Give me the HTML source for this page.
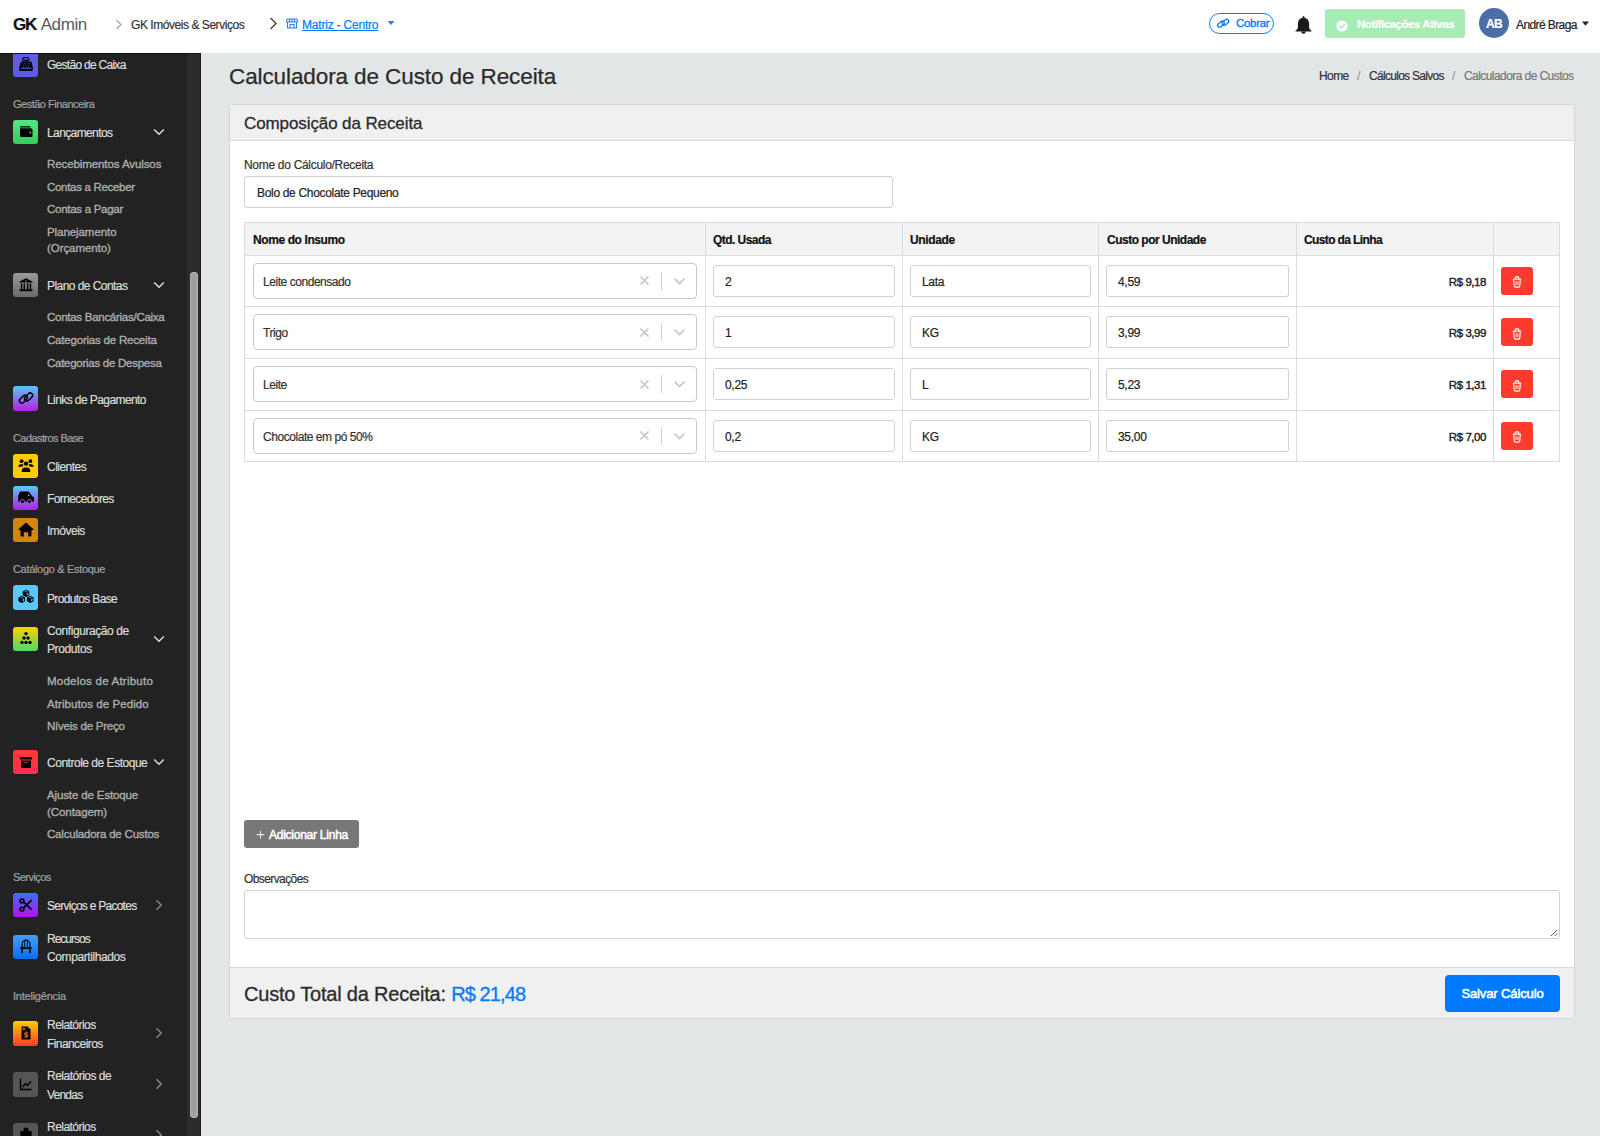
<!DOCTYPE html>
<html lang="pt-BR">
<head>
<meta charset="utf-8">
<title>Calculadora de Custo de Receita</title>
<style>
*{box-sizing:border-box;margin:0;padding:0}
html,body{width:1600px;height:1136px;overflow:hidden}
body{font-family:"Liberation Sans",sans-serif;background:#e3e6e7;color:#212529;position:relative;font-size:12px}
.abs{position:absolute;white-space:nowrap}
.sk{-webkit-text-stroke:0.2px currentColor}
#nav div,.itxt,.bc,.chead div,.st,.sh{-webkit-text-stroke:0.2px currentColor}
.ss{-webkit-text-stroke:0.35px currentColor}
/* navbar */
#nav{position:absolute;left:0;top:0;width:1600px;height:53px;background:#fff}
/* sidebar */
#side{position:absolute;left:0;top:53px;width:187px;height:1084px;background:#222;overflow:hidden;border-top:1px solid #111}
#track{position:absolute;left:187px;top:53px;width:14px;height:1084px;background:#2c2c2c;border-right:1px solid #1c1c1c;border-top:1px solid #111}
#thumb{position:absolute;left:190px;top:272px;width:8px;height:846px;background:#a0a0a0;border-radius:4px;box-shadow:inset 0 0 0 1px #b0b0b0}

.sh{position:absolute;left:13px;font-size:11px;line-height:16px;color:#a3a3a3;letter-spacing:-0.45px;white-space:nowrap}
.ss{position:absolute;left:47px;font-size:11.5px;line-height:16px;color:#adadad;letter-spacing:-0.22px;white-space:nowrap}
.st{position:absolute;left:47px;font-size:12px;line-height:16px;color:#dcdcdc;letter-spacing:-0.6px;white-space:nowrap}
.si{position:absolute;left:13px;width:25px;height:24.6px;border-radius:3px;display:flex;align-items:center;justify-content:center}
.si svg{display:block}
/* content */

.t12{font-size:12px;line-height:16px;letter-spacing:-0.5px}
.ph{position:absolute;left:229px;top:63px;font-size:22.5px;line-height:28px;color:#2b2b2b;letter-spacing:-0.1px;-webkit-text-stroke:0.25px #2b2b2b;white-space:nowrap}
.bc{position:absolute;top:68px;font-size:12px;line-height:16px;color:#333;white-space:nowrap;letter-spacing:-0.6px}
.card{position:absolute;left:229px;top:104px;width:1346px;height:915px;background:#fff;border:1px solid #d4d6d8;border-radius:3px;overflow:hidden}
.chead{position:absolute;left:0;top:0;width:100%;height:36px;background:#f0f0f0;border-bottom:1px solid #d9d9d9}
.cfoot{position:absolute;left:0;top:862px;width:100%;height:51px;background:#f0f0f0;border-top:1px solid #d9d9d9}
.inp{position:absolute;background:#fff;border:1px solid #d0d0d0;border-radius:3px}
.itxt{position:absolute;font-size:12px;line-height:16px;color:#222;white-space:nowrap;letter-spacing:-0.45px}
</style>
</head>
<body>
<div id="nav">
  <div class="abs" style="left:13px;top:15px;font-size:17px;line-height:20px;color:#111"><b style="letter-spacing:-1.3px">GK</b> <span style="font-weight:300;color:#5a5a5a;letter-spacing:-0.4px;-webkit-text-stroke:0px">Admin</span></div>
  <svg class="abs" style="left:115px;top:19px" width="8" height="11" viewBox="0 0 8 11"><path d="M1.5 1 L6 5.5 L1.5 10" fill="none" stroke="#aaa" stroke-width="1.3"/></svg>
  <div class="abs" style="left:131px;top:17px;font-size:12px;line-height:16px;color:#333;letter-spacing:-0.45px">GK Imóveis &amp; Serviços</div>
  <svg class="abs" style="left:269px;top:17px" width="9" height="13" viewBox="0 0 9 13"><path d="M1.5 1 L7 6.5 L1.5 12" fill="none" stroke="#444" stroke-width="1.4"/></svg>
  <svg class="abs" style="left:286px;top:18px" width="12" height="11" viewBox="0 0 12 11"><g fill="none" stroke="#2f7ff0" stroke-width="1.1"><path d="M1 1h10l0.6 3H0.4z"/><path d="M1.5 4v6h9V4"/><path d="M4 10V6.5h4V10"/><path d="M3.5 1v3M6 1v3M8.5 1v3"/></g></svg>
  <div class="abs" style="left:302px;top:17px;font-size:12px;line-height:16px;color:#007bff;letter-spacing:-0.2px;text-decoration:underline">Matriz - Centro</div>
  <svg class="abs" style="left:387px;top:20px" width="8" height="6" viewBox="0 0 8 6"><path d="M0.5 1h7L4 5z" fill="#2f7ff0"/></svg>

  <div class="abs" style="left:1209px;top:13px;width:65px;height:21px;border:1.2px solid #0a7cff;border-radius:11px"></div>
  <svg class="abs" style="left:1214px;top:16px" width="16" height="14" viewBox="0 0 16 14"><g fill="none" stroke="#0a7cff" stroke-width="1.3"><rect x="-3.7" y="-2" width="7.4" height="4" rx="2" transform="translate(7 8.1) rotate(-40)"/><rect x="-3.7" y="-2" width="7.4" height="4" rx="2" transform="translate(11.4 6.3) rotate(-40)"/></g></svg>
  <div class="abs" style="left:1236px;top:15px;font-size:11.5px;line-height:16px;color:#0a7cff;letter-spacing:-0.3px;-webkit-text-stroke:0.35px #0a7cff">Cobrar</div>
  <svg class="abs" style="left:1294px;top:15px" width="19" height="20" viewBox="0 0 19 20"><path d="M9.5 1.2c.6 0 1 .4 1 1v.6c2.8.5 4.6 2.9 4.6 5.8v3.2c0 1.2.5 2.3 1.4 3.1l.9.8c.3.3.2.9-.3.9H1.9c-.5 0-.6-.6-.3-.9l.9-.8c.9-.8 1.4-1.9 1.4-3.1V8.6c0-2.9 1.8-5.3 4.6-5.8v-.6c0-.6.4-1 1-1z M7.3 16.8h4.4c0 1.2-1 2-2.2 2s-2.2-.8-2.2-2z" fill="#1a1a1a"/></svg>
  <div class="abs" style="left:1325px;top:9px;width:140px;height:29px;background:#a8ecb5;border-radius:3px"></div>
  <svg class="abs" style="left:1336px;top:19.5px" width="12" height="12" viewBox="0 0 12 12"><circle cx="6" cy="6" r="5.6" fill="#fff"/><path d="M3.3 6.1 L5.2 8 L8.8 4.3" fill="none" stroke="#a8ecb5" stroke-width="1.5"/></svg>
  <div class="abs" style="left:1357px;top:16px;font-size:11.5px;line-height:16px;color:#fff;font-weight:bold;letter-spacing:-0.45px">Notificações Ativas</div>
  <div class="abs" style="left:1479px;top:8px;width:30px;height:30px;border-radius:50%;background:#4c6ea8;color:#fff;font-weight:bold;font-size:12px;line-height:32px;text-align:center;letter-spacing:-0.6px">AB</div>
  <div class="abs" style="left:1516px;top:17px;font-size:12px;line-height:16px;color:#222;letter-spacing:-0.6px">André Braga</div>
  <svg class="abs" style="left:1582px;top:21px" width="7" height="5" viewBox="0 0 7 5"><path d="M0 0.5h7L3.5 4.8z" fill="#222"/></svg>
</div>
<div id="side"><!--SIDE-->
<div class="si" style="top:-1.9px;background:#5e5ce6"><svg width="16" height="16" viewBox="0 0 16 16"><rect x="4.5" y="1.8" width="6.5" height="2.6" rx="1.2" fill="none" stroke="#000" stroke-width="1.1"/><rect x="7" y="4.2" width="1.2" height="1.8"/><path d="M4.2 5.6h8.2a1.5 1.5 0 0 1 1.4 1.1l1 4.8v2.2a1.2 1.2 0 0 1-1.2 1.2H2.4a1.2 1.2 0 0 1-1.2-1.2v-2.2l1.4-4.8a1.5 1.5 0 0 1 1.6-1.1z"/><g fill="#5e5ce6"><circle cx="4.6" cy="7.8" r="0.55"/><circle cx="6.9" cy="7.8" r="0.55"/><circle cx="9.2" cy="7.8" r="0.55"/><circle cx="11.5" cy="7.8" r="0.55"/><circle cx="5.6" cy="9.9" r="0.55"/><circle cx="8" cy="9.9" r="0.55"/><circle cx="10.4" cy="9.9" r="0.55"/><rect x="2.8" y="11.6" width="10.6" height="1.1"/></g></svg></div>
<div class="st" style="top:3.4px;letter-spacing:-0.72px">Gestão de Caixa</div>
<div class="sh" style="top:41.9px;letter-spacing:-0.50px">Gestão Financeira</div>
<div class="si" style="top:65.5px;background:linear-gradient(180deg,#55e58a,#36cc5e)"><svg width="16" height="16" viewBox="0 0 16 16"><rect x="2" y="2.2" width="10.5" height="1.3" rx="0.6"/><path d="M2 4.3h11a1.5 1.5 0 0 1 1.5 1.5v5.7a1.5 1.5 0 0 1-1.5 1.5H3.5A1.5 1.5 0 0 1 2 11.5z"/><circle cx="12.2" cy="8.6" r="0.9" fill="#50dd78"/></svg></div>
<div class="st" style="top:70.8px;letter-spacing:-0.61px">Lançamentos</div>
<svg class="abs" style="left:153px;top:73.8px" width="12" height="8" viewBox="0 0 12 8"><path d="M1.2 1.5L6 6.2L10.8 1.5" fill="none" stroke="#ddd" stroke-width="1.5"/></svg>
<div class="ss" style="top:101.9px;letter-spacing:-0.09px">Recebimentos Avulsos</div>
<div class="ss" style="top:124.6px;letter-spacing:-0.31px">Contas a Receber</div>
<div class="ss" style="top:147.1px;letter-spacing:-0.28px">Contas a Pagar</div>
<div class="ss" style="top:169.9px;letter-spacing:-0.07px">Planejamento</div>
<div class="ss" style="top:186.4px;letter-spacing:-0.07px">(Orçamento)</div>
<div class="si" style="top:218.7px;background:linear-gradient(180deg,#9a9a9a,#6a6a6a)"><svg width="16" height="16" viewBox="0 0 16 16"><path d="M8 1.2l6.3 3.2c.5.3.4 1.2-.2 1.2H1.9c-.6 0-.7-.9-.2-1.2z"/><circle cx="8" cy="4" r="0.8" fill="#909090"/><rect x="2.8" y="6.4" width="1.5" height="5.6"/><rect x="5.6" y="6.4" width="1.5" height="5.6"/><rect x="8.9" y="6.4" width="1.5" height="5.6"/><rect x="11.7" y="6.4" width="1.5" height="5.6"/><rect x="1.5" y="12.2" width="13" height="2" rx="0.4"/></svg></div>
<div class="st" style="top:224.0px;letter-spacing:-0.56px">Plano de Contas</div>
<svg class="abs" style="left:153px;top:227.0px" width="12" height="8" viewBox="0 0 12 8"><path d="M1.2 1.5L6 6.2L10.8 1.5" fill="none" stroke="#ddd" stroke-width="1.5"/></svg>
<div class="ss" style="top:255.4px;letter-spacing:-0.27px">Contas Bancárias/Caixa</div>
<div class="ss" style="top:277.8px;letter-spacing:-0.20px">Categorias de Receita</div>
<div class="ss" style="top:300.8px;letter-spacing:-0.27px">Categorias de Despesa</div>
<div class="si" style="top:332.2px;background:linear-gradient(180deg,#5ac8fa,#b41ee6)"><svg width="16" height="16" viewBox="0 0 16 16"><g fill="none" stroke="#000" stroke-width="1.5"><rect x="-4.6" y="-2.4" width="9.2" height="4.8" rx="2.4" transform="translate(5.4 9.2) rotate(-45)"/><rect x="-4.6" y="-2.4" width="9.2" height="4.8" rx="2.4" transform="translate(10.6 7.0) rotate(-45)"/></g></svg></div>
<div class="st" style="top:337.5px;letter-spacing:-0.58px">Links de Pagamento</div>
<div class="sh" style="top:375.7px;letter-spacing:-0.58px">Cadastros Base</div>
<div class="si" style="top:399.7px;background:#ffcc00"><svg width="16" height="16" viewBox="0 0 16 16"><circle cx="3.6" cy="3.2" r="1.9"/><circle cx="12.4" cy="3.2" r="1.9"/><circle cx="8" cy="5.6" r="2.2"/><path d="M0.2 8.8c0-1.6 1.2-2.5 2.6-2.5h1.6c.5 0 1 .2 1.3.4-.8.6-1.3 1.3-1.5 2.1z"/><path d="M15.8 8.8c0-1.6-1.2-2.5-2.6-2.5h-1.6c-.5 0-1 .2-1.3.4.8.6 1.3 1.3 1.5 2.1z"/><path d="M3.6 13.2c0-2.2 1.6-3.8 3.4-3.8h2c1.8 0 3.4 1.6 3.4 3.8 0 .5-.3.8-.8.8H4.4c-.5 0-.8-.3-.8-.8z"/></svg></div>
<div class="st" style="top:405.0px;letter-spacing:-0.53px">Clientes</div>
<div class="si" style="top:431.7px;background:linear-gradient(180deg,#5ac8fa,#b41ee6)"><svg width="16" height="16" viewBox="0 0 16 16"><path d="M1.5 2.8c0-.7.6-1.3 1.3-1.3h6.8c.8 0 1.5.4 1.9 1l2.6 3.8 1.2.6c.4.2.7.7.7 1.2v2.6c0 .6-.5 1.1-1.1 1.1H1.2c-.6 0-1-.5-1-1.1V6z"/><path d="M10 3.3l2 2.8H10z" fill="#8f7cf8"/><circle cx="4.4" cy="11.6" r="2.1" stroke="#a466f0" stroke-width="0.9"/><circle cx="11.4" cy="11.6" r="2.1" stroke="#a466f0" stroke-width="0.9"/></svg></div>
<div class="st" style="top:437.0px;letter-spacing:-0.61px">Fornecedores</div>
<div class="si" style="top:463.7px;background:#d4850c"><svg width="16" height="16" viewBox="0 0 16 16"><path d="M8 0.6l7.5 6.6c.3.3.1.8-.3.8H13.5v5.6c0 .5-.4.9-.9.9H10.2V10.2H5.8v4.3H3.4c-.5 0-.9-.4-.9-.9V8H.8c-.4 0-.6-.5-.3-.8z"/></svg></div>
<div class="st" style="top:469.0px;letter-spacing:-0.50px">Imóveis</div>
<div class="sh" style="top:507.3px;letter-spacing:-0.32px">Catálogo & Estoque</div>
<div class="si" style="top:531.2px;background:#5ac8fa"><svg width="16" height="16" viewBox="0 0 16 16"><g transform="translate(8 7.5) scale(1.18) translate(-8 -7.5)"><g><path d="M5.2 3.2L8 1.8l2.8 1.4v3.3L8 7.9 5.2 6.5z"/><path d="M1.6 8.3l2.8-1.4 2.8 1.4v3.3l-2.8 1.4-2.8-1.4z"/><path d="M8.8 8.3l2.8-1.4 2.8 1.4v3.3l-2.8 1.4-2.8-1.4z"/></g><g fill="#5ac8fa"><path d="M6.3 3.3L8 2.5l1.7.8L8 4.1z" opacity=".6"/><path d="M8.6 4.9l1.4-.7v1.6l-1.4.7z"/><path d="M2.7 8.4l1.7-.8 1.7.8-1.7.8z" opacity=".6"/><path d="M5 10l1.4-.7v1.6L5 11.6z"/><path d="M9.9 8.4l1.7-.8 1.7.8-1.7.8z" opacity=".6"/><path d="M12.2 10l1.4-.7v1.6l-1.4.7z"/></g></g></svg></div>
<div class="st" style="top:536.5px;letter-spacing:-0.67px">Produtos Base</div>
<div class="si" style="top:572.7px;background:linear-gradient(180deg,#ffd000,#4cd964)"><svg width="16" height="16" viewBox="0 0 16 16"><circle cx="8" cy="2.6" r="1.7"/><circle cx="6" cy="7" r="1.7"/><circle cx="10" cy="7" r="1.7"/><circle cx="4" cy="11.4" r="1.7"/><circle cx="8" cy="11.4" r="1.7"/><circle cx="12" cy="11.4" r="1.7"/></svg></div>
<div class="st" style="top:568.7px;letter-spacing:-0.42px">Configuração de</div>
<div class="st" style="top:587.3px;letter-spacing:-0.40px">Produtos</div>
<svg class="abs" style="left:153px;top:581.0px" width="12" height="8" viewBox="0 0 12 8"><path d="M1.2 1.5L6 6.2L10.8 1.5" fill="none" stroke="#ddd" stroke-width="1.5"/></svg>
<div class="ss" style="top:619.0px;letter-spacing:0.23px">Modelos de Atributo</div>
<div class="ss" style="top:641.5px;letter-spacing:0.07px">Atributos de Pedido</div>
<div class="ss" style="top:663.9px;letter-spacing:-0.23px">Níveis de Preço</div>
<div class="si" style="top:695.9px;background:linear-gradient(180deg,#ff3b30,#ff2d55)"><svg width="16" height="16" viewBox="0 0 16 16"><rect x="2" y="3" width="12" height="2.5" rx="0.3"/><path d="M3 6.5h10v6.5a1 1 0 0 1-1 1H4a1 1 0 0 1-1-1z"/><rect x="6.5" y="8" width="3" height="0.9" fill="#ff3048"/></svg></div>
<div class="st" style="top:701.2px;letter-spacing:-0.48px">Controle de Estoque</div>
<svg class="abs" style="left:153px;top:704.2px" width="12" height="8" viewBox="0 0 12 8"><path d="M1.2 1.5L6 6.2L10.8 1.5" fill="none" stroke="#ddd" stroke-width="1.5"/></svg>
<div class="ss" style="top:732.8px;letter-spacing:-0.13px">Ajuste de Estoque</div>
<div class="ss" style="top:749.8px;letter-spacing:-0.06px">(Contagem)</div>
<div class="ss" style="top:772.2px;letter-spacing:-0.20px">Calculadora de Custos</div>
<div class="sh" style="top:815.0px;letter-spacing:-0.56px">Serviços</div>
<div class="si" style="top:838.7px;background:linear-gradient(180deg,#3a70f6,#b412ee)"><svg width="16" height="16" viewBox="0 0 16 16"><g fill="none" stroke="#000" stroke-width="1.6"><circle cx="4" cy="3.9" r="1.9"/><circle cx="4" cy="12.1" r="1.9"/><path d="M5.6 5.1L13.6 12.6M5.6 10.9L13.6 3.2"/></g></svg></div>
<div class="st" style="top:844.0px;letter-spacing:-0.74px">Serviços e Pacotes</div>
<svg class="abs" style="left:155px;top:845.0px" width="8" height="12" viewBox="0 0 8 12"><path d="M1.5 1.2L6.2 6L1.5 10.8" fill="none" stroke="#888" stroke-width="1.5"/></svg>
<div class="si" style="top:880.7px;background:linear-gradient(180deg,#40a0fa,#0a6df2)"><svg width="16" height="16" viewBox="0 0 16 16"><g fill="none" stroke="#000" stroke-width="1.2"><path d="M4.2 8.2V5a3.8 3.8 0 0 1 7.6 0v3.2"/><path d="M6.7 2.2v6M9.3 2.2v6" stroke-width="0.9"/></g><rect x="2.3" y="8.3" width="11.4" height="1.6" rx="0.4"/><rect x="3.3" y="9.5" width="1.5" height="4.6"/><rect x="11.2" y="9.5" width="1.5" height="4.6"/></svg></div>
<div class="st" style="top:876.7px;letter-spacing:-0.99px">Recursos</div>
<div class="st" style="top:895.3px;letter-spacing:-0.40px">Compartilhados</div>
<div class="sh" style="top:933.8px;letter-spacing:-0.23px">Inteligência</div>
<div class="si" style="top:967.1px;background:linear-gradient(180deg,#ffcc00,#ff3b30)"><svg width="16" height="16" viewBox="0 0 16 16"><path d="M3.5 1.5h6l3 3v10h-9z"/><path d="M8.2 6.5v6.5M10 7.8H7.3a1 1 0 0 0 0 2h1.8a1 1 0 0 1 0 2H6.4" fill="none" stroke="#ff7a1a" stroke-width="0.9"/><rect x="4.5" y="3" width="2.5" height="0.8" fill="#ff9a10"/><rect x="4.5" y="4.6" width="2.5" height="0.8" fill="#ff9a10"/></svg></div>
<div class="st" style="top:963.1px;letter-spacing:-0.54px">Relatórios</div>
<div class="st" style="top:981.7px;letter-spacing:-0.58px">Financeiros</div>
<svg class="abs" style="left:155px;top:973.4px" width="8" height="12" viewBox="0 0 8 12"><path d="M1.5 1.2L6.2 6L1.5 10.8" fill="none" stroke="#888" stroke-width="1.5"/></svg>
<div class="si" style="top:1018.1px;background:#555"><svg width="16" height="16" viewBox="0 0 16 16"><g fill="none" stroke="#000" stroke-width="1.4"><path d="M2.5 2.5v11h11"/><path d="M4.5 11l3-3.5 2 2 3.5-4"/></g></svg></div>
<div class="st" style="top:1014.1px;letter-spacing:-0.50px">Relatórios de</div>
<div class="st" style="top:1032.7px;letter-spacing:-0.78px">Vendas</div>
<svg class="abs" style="left:155px;top:1024.4px" width="8" height="12" viewBox="0 0 8 12"><path d="M1.5 1.2L6.2 6L1.5 10.8" fill="none" stroke="#888" stroke-width="1.5"/></svg>
<div class="si" style="top:1068.7px;background:#555"><svg width="16" height="16" viewBox="0 0 16 16"><path d="M5.5 4V3a2.5 2.5 0 0 1 5 0v1h3l.5 10H2l.5-10z"/></svg></div>
<div class="st" style="top:1064.7px;letter-spacing:-0.54px">Relatórios</div>
<svg class="abs" style="left:155px;top:1075.0px" width="8" height="12" viewBox="0 0 8 12"><path d="M1.5 1.2L6.2 6L1.5 10.8" fill="none" stroke="#888" stroke-width="1.5"/></svg>
<!--/SIDE--></div>
<div id="track"></div>
<div id="thumb"></div>
<div class="ph">Calculadora de Custo de Receita</div>
<div class="bc" style="left:1319px">Home</div>
<div class="bc" style="left:1357px;color:#999;letter-spacing:0">/</div>
<div class="bc" style="left:1369px;letter-spacing:-0.7px">Cálculos Salvos</div>
<div class="bc" style="left:1452px;color:#999;letter-spacing:0">/</div>
<div class="bc" style="left:1464px;color:#777;letter-spacing:-0.57px">Calculadora de Custos</div>
<div class="card">
  <div class="chead"><div class="abs" style="left:14px;top:9px;font-size:17px;line-height:20px;color:#2b2b2b;letter-spacing:-0.1px;-webkit-text-stroke:0.3px #2b2b2b">Composição da Receita</div></div>
  <div class="cfoot"></div>
</div>
<!--BODY-->
<div class="itxt" style="left:244px;top:156.5px;color:#333;letter-spacing:-0.3px">Nome do Cálculo/Receita</div>
<div class="inp" style="left:244px;top:176px;width:649px;height:32px"></div>
<div class="itxt" style="left:257px;top:185px;letter-spacing:-0.32px">Bolo de Chocolate Pequeno</div>
<div class="abs" style="left:244px;top:222px;width:1316px;height:33px;background:#f3f3f3"></div>
<div class="abs" style="left:244px;top:222px;width:1316px;height:240px;border:1px solid #dcdcdc"></div>
<div class="abs" style="left:705px;top:222px;width:1px;height:240px;background:#dcdcdc"></div>
<div class="abs" style="left:902px;top:222px;width:1px;height:240px;background:#dcdcdc"></div>
<div class="abs" style="left:1098px;top:222px;width:1px;height:240px;background:#dcdcdc"></div>
<div class="abs" style="left:1296px;top:222px;width:1px;height:240px;background:#dcdcdc"></div>
<div class="abs" style="left:1493px;top:222px;width:1px;height:240px;background:#dcdcdc"></div>
<div class="abs" style="left:244px;top:255px;width:1316px;height:1px;background:#dcdcdc"></div>
<div class="abs" style="left:244px;top:306.0px;width:1316px;height:1px;background:#dcdcdc"></div>
<div class="abs" style="left:244px;top:357.5px;width:1316px;height:1px;background:#dcdcdc"></div>
<div class="abs" style="left:244px;top:409.5px;width:1316px;height:1px;background:#dcdcdc"></div>
<div class="itxt" style="left:253px;top:232px;font-weight:bold;color:#111;letter-spacing:-0.4px">Nome do Insumo</div>
<div class="itxt" style="left:713px;top:232px;font-weight:bold;color:#111;letter-spacing:-0.55px">Qtd. Usada</div>
<div class="itxt" style="left:910px;top:232px;font-weight:bold;color:#111;letter-spacing:-0.38px">Unidade</div>
<div class="itxt" style="left:1107px;top:232px;font-weight:bold;color:#111;letter-spacing:-0.5px">Custo por Unidade</div>
<div class="itxt" style="left:1304px;top:232px;font-weight:bold;color:#111;letter-spacing:-0.62px">Custo da Linha</div>
<div class="inp" style="left:253px;top:262.75px;width:444px;height:36px;border-color:#c8c8c8;border-radius:4px"></div>
<div class="itxt" style="left:263px;top:273.75px;color:#333;letter-spacing:-0.45px">Leite condensado</div>
<svg class="abs" style="left:639px;top:275.25px" width="11" height="11" viewBox="0 0 11 11"><path d="M1.5 1.5L9.5 9.5M9.5 1.5L1.5 9.5" stroke="#c4c4c4" stroke-width="1.6"/></svg>
<div class="abs" style="left:661px;top:271.75px;width:1px;height:18px;background:#d0d0d0"></div>
<svg class="abs" style="left:673px;top:276.75px" width="13" height="8" viewBox="0 0 13 8"><path d="M1.5 1.5L6.5 6.5L11.5 1.5" fill="none" stroke="#c4c4c4" stroke-width="1.6"/></svg>
<div class="inp" style="left:713px;top:264.75px;width:182px;height:32px"></div>
<div class="itxt" style="left:725px;top:273.75px;color:#222;letter-spacing:-0.3px">2</div>
<div class="inp" style="left:910px;top:264.75px;width:181px;height:32px"></div>
<div class="itxt" style="left:922px;top:273.75px;color:#222;letter-spacing:-0.3px">Lata</div>
<div class="inp" style="left:1106px;top:264.75px;width:183px;height:32px"></div>
<div class="itxt" style="left:1118px;top:273.75px;color:#222;letter-spacing:-0.3px">4,59</div>
<div class="itxt" style="left:1300px;width:186px;text-align:right;top:273.75px;color:#222;font-size:11.5px;letter-spacing:-0.45px;-webkit-text-stroke:0.4px #222">R$ 9,18</div>
<div class="abs" style="left:1501px;top:266.75px;width:32px;height:28px;background:#ff3b30;border-radius:3px"></div>
<svg class="abs" style="left:1512px;top:276.25px" width="10" height="12" viewBox="0 0 10 12"><g fill="none" stroke="#fff" stroke-width="1.1"><path d="M0.8 3.2h8.4"/><path d="M3.3 3V1.6c0-.4.3-.7.7-.7h2c.4 0 .7.3.7.7V3"/><path d="M1.7 3.4l.5 6.6c.1.7.5 1.1 1.2 1.1h3.2c.7 0 1.1-.4 1.2-1.1l.5-6.6"/><path d="M4.1 5.3v3.8M5.9 5.3v3.8" stroke-width="0.9"/></g></svg>
<div class="inp" style="left:253px;top:314.25px;width:444px;height:36px;border-color:#c8c8c8;border-radius:4px"></div>
<div class="itxt" style="left:263px;top:325.25px;color:#333;letter-spacing:-0.45px">Trigo</div>
<svg class="abs" style="left:639px;top:326.75px" width="11" height="11" viewBox="0 0 11 11"><path d="M1.5 1.5L9.5 9.5M9.5 1.5L1.5 9.5" stroke="#c4c4c4" stroke-width="1.6"/></svg>
<div class="abs" style="left:661px;top:323.25px;width:1px;height:18px;background:#d0d0d0"></div>
<svg class="abs" style="left:673px;top:328.25px" width="13" height="8" viewBox="0 0 13 8"><path d="M1.5 1.5L6.5 6.5L11.5 1.5" fill="none" stroke="#c4c4c4" stroke-width="1.6"/></svg>
<div class="inp" style="left:713px;top:316.25px;width:182px;height:32px"></div>
<div class="itxt" style="left:725px;top:325.25px;color:#222;letter-spacing:-0.3px">1</div>
<div class="inp" style="left:910px;top:316.25px;width:181px;height:32px"></div>
<div class="itxt" style="left:922px;top:325.25px;color:#222;letter-spacing:-0.3px">KG</div>
<div class="inp" style="left:1106px;top:316.25px;width:183px;height:32px"></div>
<div class="itxt" style="left:1118px;top:325.25px;color:#222;letter-spacing:-0.3px">3,99</div>
<div class="itxt" style="left:1300px;width:186px;text-align:right;top:325.25px;color:#222;font-size:11.5px;letter-spacing:-0.45px;-webkit-text-stroke:0.4px #222">R$ 3,99</div>
<div class="abs" style="left:1501px;top:318.25px;width:32px;height:28px;background:#ff3b30;border-radius:3px"></div>
<svg class="abs" style="left:1512px;top:327.75px" width="10" height="12" viewBox="0 0 10 12"><g fill="none" stroke="#fff" stroke-width="1.1"><path d="M0.8 3.2h8.4"/><path d="M3.3 3V1.6c0-.4.3-.7.7-.7h2c.4 0 .7.3.7.7V3"/><path d="M1.7 3.4l.5 6.6c.1.7.5 1.1 1.2 1.1h3.2c.7 0 1.1-.4 1.2-1.1l.5-6.6"/><path d="M4.1 5.3v3.8M5.9 5.3v3.8" stroke-width="0.9"/></g></svg>
<div class="inp" style="left:253px;top:366.0px;width:444px;height:36px;border-color:#c8c8c8;border-radius:4px"></div>
<div class="itxt" style="left:263px;top:377.0px;color:#333;letter-spacing:-0.45px">Leite</div>
<svg class="abs" style="left:639px;top:378.5px" width="11" height="11" viewBox="0 0 11 11"><path d="M1.5 1.5L9.5 9.5M9.5 1.5L1.5 9.5" stroke="#c4c4c4" stroke-width="1.6"/></svg>
<div class="abs" style="left:661px;top:375.0px;width:1px;height:18px;background:#d0d0d0"></div>
<svg class="abs" style="left:673px;top:380.0px" width="13" height="8" viewBox="0 0 13 8"><path d="M1.5 1.5L6.5 6.5L11.5 1.5" fill="none" stroke="#c4c4c4" stroke-width="1.6"/></svg>
<div class="inp" style="left:713px;top:368.0px;width:182px;height:32px"></div>
<div class="itxt" style="left:725px;top:377.0px;color:#222;letter-spacing:-0.3px">0,25</div>
<div class="inp" style="left:910px;top:368.0px;width:181px;height:32px"></div>
<div class="itxt" style="left:922px;top:377.0px;color:#222;letter-spacing:-0.3px">L</div>
<div class="inp" style="left:1106px;top:368.0px;width:183px;height:32px"></div>
<div class="itxt" style="left:1118px;top:377.0px;color:#222;letter-spacing:-0.3px">5,23</div>
<div class="itxt" style="left:1300px;width:186px;text-align:right;top:377.0px;color:#222;font-size:11.5px;letter-spacing:-0.45px;-webkit-text-stroke:0.4px #222">R$ 1,31</div>
<div class="abs" style="left:1501px;top:370.0px;width:32px;height:28px;background:#ff3b30;border-radius:3px"></div>
<svg class="abs" style="left:1512px;top:379.5px" width="10" height="12" viewBox="0 0 10 12"><g fill="none" stroke="#fff" stroke-width="1.1"><path d="M0.8 3.2h8.4"/><path d="M3.3 3V1.6c0-.4.3-.7.7-.7h2c.4 0 .7.3.7.7V3"/><path d="M1.7 3.4l.5 6.6c.1.7.5 1.1 1.2 1.1h3.2c.7 0 1.1-.4 1.2-1.1l.5-6.6"/><path d="M4.1 5.3v3.8M5.9 5.3v3.8" stroke-width="0.9"/></g></svg>
<div class="inp" style="left:253px;top:417.75px;width:444px;height:36px;border-color:#c8c8c8;border-radius:4px"></div>
<div class="itxt" style="left:263px;top:428.75px;color:#333;letter-spacing:-0.45px">Chocolate em pó 50%</div>
<svg class="abs" style="left:639px;top:430.25px" width="11" height="11" viewBox="0 0 11 11"><path d="M1.5 1.5L9.5 9.5M9.5 1.5L1.5 9.5" stroke="#c4c4c4" stroke-width="1.6"/></svg>
<div class="abs" style="left:661px;top:426.75px;width:1px;height:18px;background:#d0d0d0"></div>
<svg class="abs" style="left:673px;top:431.75px" width="13" height="8" viewBox="0 0 13 8"><path d="M1.5 1.5L6.5 6.5L11.5 1.5" fill="none" stroke="#c4c4c4" stroke-width="1.6"/></svg>
<div class="inp" style="left:713px;top:419.75px;width:182px;height:32px"></div>
<div class="itxt" style="left:725px;top:428.75px;color:#222;letter-spacing:-0.3px">0,2</div>
<div class="inp" style="left:910px;top:419.75px;width:181px;height:32px"></div>
<div class="itxt" style="left:922px;top:428.75px;color:#222;letter-spacing:-0.3px">KG</div>
<div class="inp" style="left:1106px;top:419.75px;width:183px;height:32px"></div>
<div class="itxt" style="left:1118px;top:428.75px;color:#222;letter-spacing:-0.3px">35,00</div>
<div class="itxt" style="left:1300px;width:186px;text-align:right;top:428.75px;color:#222;font-size:11.5px;letter-spacing:-0.45px;-webkit-text-stroke:0.4px #222">R$ 7,00</div>
<div class="abs" style="left:1501px;top:421.75px;width:32px;height:28px;background:#ff3b30;border-radius:3px"></div>
<svg class="abs" style="left:1512px;top:431.25px" width="10" height="12" viewBox="0 0 10 12"><g fill="none" stroke="#fff" stroke-width="1.1"><path d="M0.8 3.2h8.4"/><path d="M3.3 3V1.6c0-.4.3-.7.7-.7h2c.4 0 .7.3.7.7V3"/><path d="M1.7 3.4l.5 6.6c.1.7.5 1.1 1.2 1.1h3.2c.7 0 1.1-.4 1.2-1.1l.5-6.6"/><path d="M4.1 5.3v3.8M5.9 5.3v3.8" stroke-width="0.9"/></g></svg>
<div class="abs" style="left:244px;top:820px;width:115px;height:28px;background:#777;border-radius:3px"></div>
<svg class="abs" style="left:256px;top:830px" width="9" height="9" viewBox="0 0 9 9"><path d="M4.5 0.8v7.6M0.6 4.6h7.8" stroke="#e6e6e6" stroke-width="1.1"/></svg>
<div class="itxt" style="left:269px;top:827px;color:#fff;letter-spacing:-0.25px;-webkit-text-stroke:0.5px #fff">Adicionar Linha</div>
<div class="itxt" style="left:244px;top:870.5px;color:#333;letter-spacing:-0.6px">Observações</div>
<div class="inp" style="left:244px;top:890px;width:1316px;height:49px"></div>
<svg class="abs" style="left:1550px;top:929px" width="8" height="8" viewBox="0 0 8 8"><path d="M7 1L1 7M7 4.5L4.5 7" stroke="#555" stroke-width="1"/></svg>
<div class="abs" style="left:244px;top:982px;font-size:20px;line-height:24px;color:#2b2b2b;letter-spacing:-0.2px;-webkit-text-stroke:0.3px #2b2b2b">Custo Total da Receita: <span style="color:#007bff;letter-spacing:-0.9px;-webkit-text-stroke:0.3px #007bff">R$ 21,48</span></div>
<div class="abs" style="left:1445px;top:975px;width:115px;height:37px;background:#007bff;border-radius:4px"></div>
<div class="abs" style="left:1445px;top:985px;width:115px;text-align:center;font-size:13px;line-height:17px;color:#fff;letter-spacing:-0.12px;-webkit-text-stroke:0.55px #fff">Salvar Cálculo</div>
<!--/BODY-->
</body>
</html>
